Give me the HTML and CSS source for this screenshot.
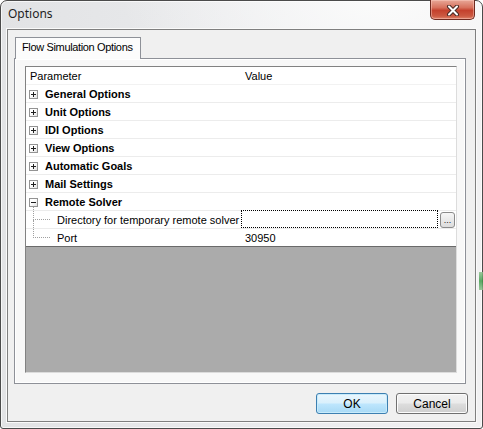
FILE: index.html
```html
<!DOCTYPE html>
<html lang="en">
<head>
<meta charset="utf-8">
<title>Options</title>
<link rel="stylesheet" href="styles.css">
</head>
<body>
<div class="window">
  <span class="desk-glow"></span>
  <div class="titlebar">
    <span class="title">Options</span>
    <button class="close" type="button" aria-label="Close">
      <svg width="16" height="11" viewBox="0 0 16 11">
        <path d="M4 1.5 L12 9.5 M12 1.5 L4 9.5" stroke="#4a2a24" stroke-width="4" stroke-linecap="round"/>
        <path d="M4 1.5 L12 9.5 M12 1.5 L4 9.5" stroke="#ffffff" stroke-width="2" stroke-linecap="round"/>
      </svg>
    </button>
  </div>
  <div class="client">
    <div class="tabs">
      <div class="tab active">Flow Simulation Options</div>
    </div>
    <div class="tab-page">
      <div class="grid">
        <div class="row head">
          <span class="col-name">Parameter</span>
          <span class="col-value">Value</span>
        </div>
        <div class="row group"><span class="col-name"><i class="exp plus"></i><b>General Options</b></span></div>
        <div class="row group"><span class="col-name"><i class="exp plus"></i><b>Unit Options</b></span></div>
        <div class="row group"><span class="col-name"><i class="exp plus"></i><b>IDI Options</b></span></div>
        <div class="row group"><span class="col-name"><i class="exp plus"></i><b>View Options</b></span></div>
        <div class="row group"><span class="col-name"><i class="exp plus"></i><b>Automatic Goals</b></span></div>
        <div class="row group"><span class="col-name"><i class="exp plus"></i><b>Mail Settings</b></span></div>
        <div class="row group"><span class="col-name"><i class="exp minus"></i><b>Remote Solver</b></span></div>
        <div class="row child">
          <span class="col-name"><i class="branch"></i>Directory for temporary remote solver</span>
          <span class="col-value edit">
            <span class="field"></span>
            <button class="browse" type="button">...</button>
          </span>
        </div>
        <div class="row child last">
          <span class="col-name"><i class="branch end"></i>Port</span>
          <span class="col-value">30950</span>
        </div>
        <div class="empty"></div>
      </div>
    </div>
    <div class="actions">
      <button class="btn default" type="button">OK</button>
      <button class="btn" type="button">Cancel</button>
    </div>
  </div>
</div>
</body>
</html>
```

FILE: styles.css
```css
html, body {
  margin: 0;
  padding: 0;
  background: #ffffff;
}

.window {
  position: relative;
  width: 483px;
  height: 429px;
  box-sizing: border-box;
  border: 1px solid #4b4b4b;
  border-radius: 7px 7px 3px 3px;
  background:
    radial-gradient(ellipse 260px 120px at 380px 0px, #fbfbfb 0%, rgba(251,251,251,0) 100%),
    linear-gradient(90deg, #e2e3e5 0%, #ebecee 60%, #f1f1f2 100%);
  box-shadow: inset 0 0 0 1px rgba(255,255,255,0.7);
  display: flex;
  flex-direction: column;
  font-family: "Liberation Sans", Arial, sans-serif;
  color: #000;
}

/* a bit of desktop showing through the right edge of the frame */
.desk-glow {
  position: absolute;
  right: -1px;
  top: 271px;
  width: 4px;
  height: 18px;
  background: linear-gradient(#8cc08c, #3f9a4a, #8cc08c);
  opacity: 0.85;
}

.titlebar {
  height: 28px;
  display: flex;
  align-items: flex-start;
  padding-left: 7px;
}

.title {
  font-family: "Noto Sans", "Open Sans", sans-serif;
  font-size: 12px;
  line-height: 28px;
  margin-top: -1px;
  color: #1e1e1e;
}

.close {
  margin-left: auto;
  margin-right: 7px;
  margin-top: -1px;
  width: 45px;
  height: 20px;
  padding: 0;
  border: 1px solid #6e2a20;
  border-top: none;
  border-radius: 0 0 5px 5px;
  background: linear-gradient(#e8a898 0%, #d7715d 40%, #c4412d 55%, #cc5a42 85%, #e0846c 100%);
  box-shadow: inset 0 0 0 1px rgba(255, 210, 200, 0.45);
  display: flex;
  align-items: center;
  justify-content: center;
}

.close svg {
  display: block;
  margin-top: 1px;
}

.client {
  margin: 0 6px 6px 6px;
  flex: 1;
  box-sizing: border-box;
  border: 1px solid #7f7f7f;
  box-shadow: 0 0 0 1px #fafafa;
  background: #f0f0f0;
  padding: 7px 9px 7px 6px;
  display: flex;
  flex-direction: column;
}

.tabs {
  display: flex;
  height: 21px;
}

.tab {
  box-sizing: border-box;
  margin-left: 1px;
  width: 126px;
  height: 22px;
  border: 1px solid #8e9198;
  border-bottom: none;
  background: #fcfcfc;
  font-family: "Liberation Sans", Arial, sans-serif;
  font-size: 11px;
  letter-spacing: -0.35px;
  line-height: 19px;
  padding-left: 6px;
  white-space: nowrap;
  color: #000;
  position: relative;
  z-index: 1;
}

.tab-page {
  box-sizing: border-box;
  height: 326px;
  border: 1px solid #8e9198;
  background: #f8f8f8;
  box-shadow: inset 1px 1px 0 #ffffff, inset -1px -1px 0 #ffffff;
  padding: 7px 8px 10px 10px;
}

.grid {
  box-sizing: border-box;
  height: 307px;
  border-top: 1px solid #828282;
  border-left: 1px solid #828282;
  border-right: 1px solid #dcdcdc;
  border-bottom: 1px solid #dcdcdc;
  background: #ffffff;
  display: flex;
  flex-direction: column;
  font-size: 11px;
}

.row {
  box-sizing: border-box;
  height: 18px;
  flex: none;
  display: flex;
  align-items: center;
  border-bottom: 1px solid #ececec;
}

.row.head {
  border-bottom: 1px solid #f2f2f2;
}

.col-name {
  width: 214px;
  flex: none;
  display: flex;
  align-items: center;
  padding-left: 4px;
  box-sizing: border-box;
  white-space: nowrap;
  position: relative;
  height: 100%;
}

.col-value {
  flex: 1;
  padding-left: 5px;
  display: flex;
  align-items: center;
  height: 100%;
}

.group .col-name {
  padding-left: 3px;
}

.group b {
  font-weight: bold;
  margin-left: 7px;
}

.exp {
  box-sizing: border-box;
  width: 9px;
  height: 9px;
  border: 1px solid #939393;
  background: linear-gradient(135deg, #ffffff 40%, #e2e2e2 100%);
  position: relative;
  flex: none;
  margin-top: 1px;
}

.exp::before {
  content: "";
  position: absolute;
  left: 1px;
  top: 3px;
  width: 5px;
  height: 1px;
  background: #1f1f1f;
}

.exp.plus::after {
  content: "";
  position: absolute;
  left: 3px;
  top: 1px;
  width: 1px;
  height: 5px;
  background: #1f1f1f;
}

/* dotted tree connectors under the expanded group */
.child .col-name {
  padding-left: 31px;
}

.branch {
  position: absolute;
  left: 7px;
  top: -4px;
  width: 17px;
  height: 13px;
  border-left: 1px dotted #a0a0a0;
  border-bottom: 1px dotted #a0a0a0;
  box-sizing: border-box;
}

.branch.end {
  top: -9px;
  height: 18px;
}

.row.last {
  border-bottom: 1px solid #6a6a6a;
}

.edit {
  padding-left: 1px;
  gap: 2px;
}

.field {
  box-sizing: border-box;
  width: 197px;
  height: 18px;
  margin-top: -1px;
  border: 1px dotted #000;
  background: #fff;
}

.browse {
  box-sizing: border-box;
  width: 15px;
  height: 16px;
  padding: 0;
  border: 1px solid #8a8a8a;
  border-radius: 3px;
  background: linear-gradient(#f6f6f6, #dcdcdc);
  font-family: "Liberation Sans", Arial, sans-serif;
  font-size: 9px;
  line-height: 12px;
  color: #222;
  text-align: center;
}

.empty {
  flex: 1;
  background: #ababab;
}

.actions {
  margin-top: 9px;
  margin-right: -2px;
  display: flex;
  justify-content: flex-end;
  gap: 8px;
}

.btn {
  box-sizing: border-box;
  width: 72px;
  height: 21px;
  padding: 0;
  border: 1px solid #707070;
  border-radius: 3px;
  background: linear-gradient(#f2f2f2 0%, #ebebeb 48%, #dddddd 52%, #cfcfcf 100%);
  box-shadow: inset 0 0 0 1px #fcfcfc;
  font-family: "Liberation Sans", Arial, sans-serif;
  font-size: 12px;
  color: #000;
}

.btn.default {
  border-color: #3c7fb1;
  background: linear-gradient(#eaf6fd 0%, #d9f0fc 48%, #bee6fd 52%, #a7d9f5 100%);
  box-shadow: inset 0 0 0 1px #c8ebfb;
}
```
